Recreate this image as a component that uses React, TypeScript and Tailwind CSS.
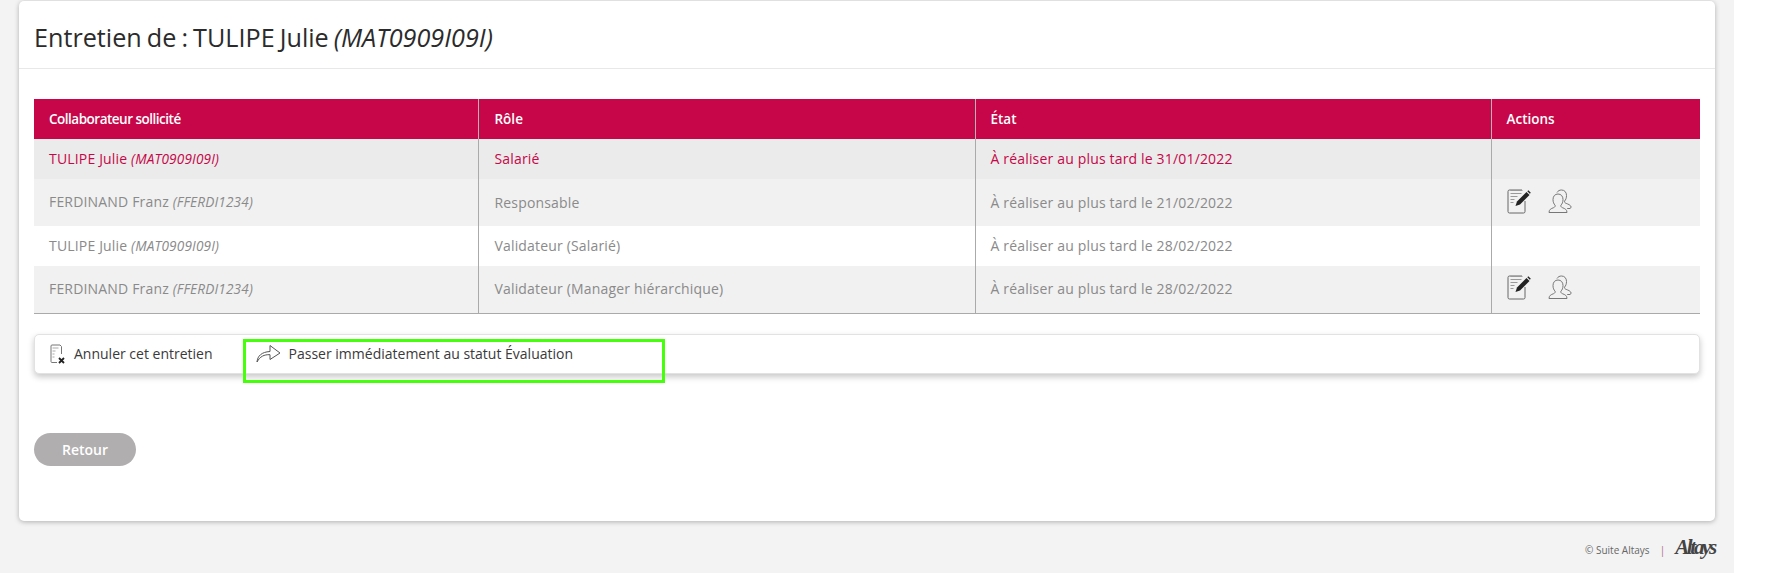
import React from 'react';

const rows = [
  { name: 'TULIPE Julie', code: '(MAT0909I09I)', role: 'Salarié', state: 'À réaliser au plus tard le 31/01/2022', current: true, bg: 'bg-[#ebebeb]', h: 'h-[40px]', actions: false },
  { name: 'FERDINAND Franz', code: '(FFERDI1234)', role: 'Responsable', state: 'À réaliser au plus tard le 21/02/2022', current: false, bg: 'bg-[#f1f1f1]', h: 'h-[47px]', actions: true },
  { name: 'TULIPE Julie', code: '(MAT0909I09I)', role: 'Validateur (Salarié)', state: 'À réaliser au plus tard le 28/02/2022', current: false, bg: 'bg-white', h: 'h-[40px]', actions: false },
  { name: 'FERDINAND Franz', code: '(FFERDI1234)', role: 'Validateur (Manager hiérarchique)', state: 'À réaliser au plus tard le 28/02/2022', current: false, bg: 'bg-[#f1f1f1]', h: 'h-[47px]', actions: true },
];

function EditIcon() {
  return (
    <svg width="24" height="25" viewBox="0 0 24 25" fill="none" className="shrink-0">
      <path d="M18 12v10.500a1.500 1.500 0 0 1-1.500 1.500H2.500A1.500 1.500 0 0 1 1 22.500V2.500A1.500 1.500 0 0 1 2.500 1H15" stroke="#666" strokeWidth="1" />
      <path d="M3.500 1.500h12M3.500 4.500h11M3.500 7.500h7M3.500 10.500h4M3.500 13.500h3" stroke="#999" strokeWidth="1.200" />
      <path d="M8.500 17l1.500-4.500L19.500 3l3 3-9.500 9.500z" fill="#222" />
      <path d="M20.300 2.200l1-1 2.500 2.500-1 1z" fill="#222" />
    </svg>
  );
}

function UsersIcon() {
  return (
    <svg width="24" height="25" viewBox="0 0 24 25" fill="none" stroke="#777" strokeWidth="1" className="shrink-0">
      <path d="M1 23.500c0-3 2-3.800 4.500-4.800 1.500-.6 1.800-1.300 1.600-2.500C5.800 15 5 13 5 10.500 5 7.200 7 5 10 5s5 2.200 5 5.500c0 2.500-.8 4.500-2.100 5.700-.2 1.200.1 1.900 1.600 2.500 2.500 1 4.500 1.800 4.500 4.800z" />
      <path d="M9 3.500C10 1.800 11.500 1 13.500 1c3 0 5 2.200 5 5.500 0 2.400-.7 4.300-1.900 5.500-.2 1.200.1 1.800 1.600 2.400 2 .8 4.300 1.500 5 3.600l-1 1.500h-3" />
    </svg>
  );
}

function CancelIcon() {
  return (
    <svg width="17" height="20" viewBox="0 0 17 20" fill="none" className="shrink-0">
      <path d="M7 18.500H2a1 1 0 0 1-1-1V2a1 1 0 0 1 1-1h8l1.500 1.500V10" stroke="#777" />
      <path d="M2.500 4h6M2.500 7h3M2.500 10h2M2.500 13h2" stroke="#aaa" />
      <path d="M9 14l5 5M14 14l-5 5" stroke="#222" strokeWidth="1.800" />
    </svg>
  );
}

function ForwardIcon() {
  return (
    <svg width="25" height="19" viewBox="0 0 25 19" fill="none" stroke="#555" strokeWidth="1" className="shrink-0">
      <path d="M1 18c.5-6 4.500-10 13-10.500V1.500L24 9l-10 6.500v-4.800c-6-.3-10 1.800-13 7.300z" />
    </svg>
  );
}

export default function App() {
  return (
    <div className="w-[1775px] h-[573px] bg-white font-['Open_Sans',sans-serif] overflow-hidden">
      <div className="w-[1734px] h-full bg-[#f3f3f3] pt-px pl-[19px]">
        {/* Card */}
        <div className="w-[1696px] h-[520px] bg-white rounded-[5px] shadow-[0_1px_5px_rgba(0,0,0,0.28)]">
          <div className="h-[68px] pl-[15px] pt-[6px] flex items-center border-b border-[#e8e8e8] text-[25.200px] text-[#2b2b2b] [word-spacing:-1.500px]">
            <h1 className="font-normal">
              Entretien de : TULIPE Julie <em>(MAT0909I09I)</em>
            </h1>
          </div>

          <div className="relative px-[15px] pt-[30px]">
            <table className="w-[1666px] table-fixed border-collapse text-[14px] border-b border-[#aaaaaa]">
              <colgroup>
                <col className="w-[444px]" />
                <col className="w-[497px]" />
                <col className="w-[516px]" />
                <col className="w-[209px]" />
              </colgroup>
              <thead>
                <tr className="h-[40px] bg-[#c60648] text-white text-left text-[13.500px]">
                  <th className="font-semibold pl-[15px] border-r border-[#b5b5b5] tracking-[-0.5px]">Collaborateur sollicité</th>
                  <th className="font-semibold pl-[16px] border-r border-[#b5b5b5]">Rôle</th>
                  <th className="font-semibold pl-[15px] border-r border-[#b5b5b5]">État</th>
                  <th className="font-semibold pl-[15px]">Actions</th>
                </tr>
              </thead>
              <tbody>
                {rows.map((row, idx) => {
                  const color = row.current ? 'text-[#c60648]' : 'text-[#8a8a8a]';
                  return (
                    <tr key={idx} className={`${row.bg} ${row.h} ${color} font-medium tracking-[0.17px]`}>
                      <td className="pl-[15px] pb-px border-r border-[#aaaaaa]">
                        {row.name} <em className="text-[13.600px] font-normal">{row.code}</em>
                      </td>
                      <td className="pl-[16px] pb-px border-r border-[#aaaaaa]">{row.role}</td>
                      <td className="pl-[15px] pb-px border-r border-[#aaaaaa]">{row.state}</td>
                      <td className="pl-[15px]">
                        {row.actions && (
                          <div className="flex items-center gap-[17px] -mt-[3px]">
                            <EditIcon />
                            <UsersIcon />
                          </div>
                        )}
                      </td>
                    </tr>
                  );
                })}
              </tbody>
            </table>

            {/* Action bar */}
            <div className="mt-[20px] w-[1666px] h-[40px] flex items-center pl-[15px] bg-white border border-[#e2e2e2] rounded-[5px] shadow-[0_3px_6px_rgba(0,0,0,0.22)] text-[14px] text-[#3a3a3a]">
              <CancelIcon />
              <span className="ml-[7px]">Annuler cet entretien</span>
              <span className="ml-[43px]"><ForwardIcon /></span>
              <span className="ml-[8px]">Passer immédiatement au statut Évaluation</span>
            </div>

            {/* Annotation drawn over the screenshot */}
            <div className="absolute left-[224px] top-[270px] w-[422px] h-[44px] border-[3px] border-[#46ff0a]" />

            <button className="mt-[59px] w-[102px] h-[33px] rounded-full bg-[#b0aeae] text-white text-[14px] font-semibold">
              Retour
            </button>
          </div>
        </div>

        {/* Footer */}
        <div className="w-[1696px] mt-[14px] flex items-center justify-end text-[#666]">
          <span className="text-[10px] mt-[6px]">© Suite Altays</span>
          <span className="ml-[10px] mt-[6px] text-[10px] text-[#b06a7c]">|</span>
          <span className="ml-[10px] font-['Liberation_Serif',serif] italic font-bold text-[21px] leading-6 text-[#444] tracking-[-2.300px]">Altays</span>
        </div>
      </div>
    </div>
  );
}
